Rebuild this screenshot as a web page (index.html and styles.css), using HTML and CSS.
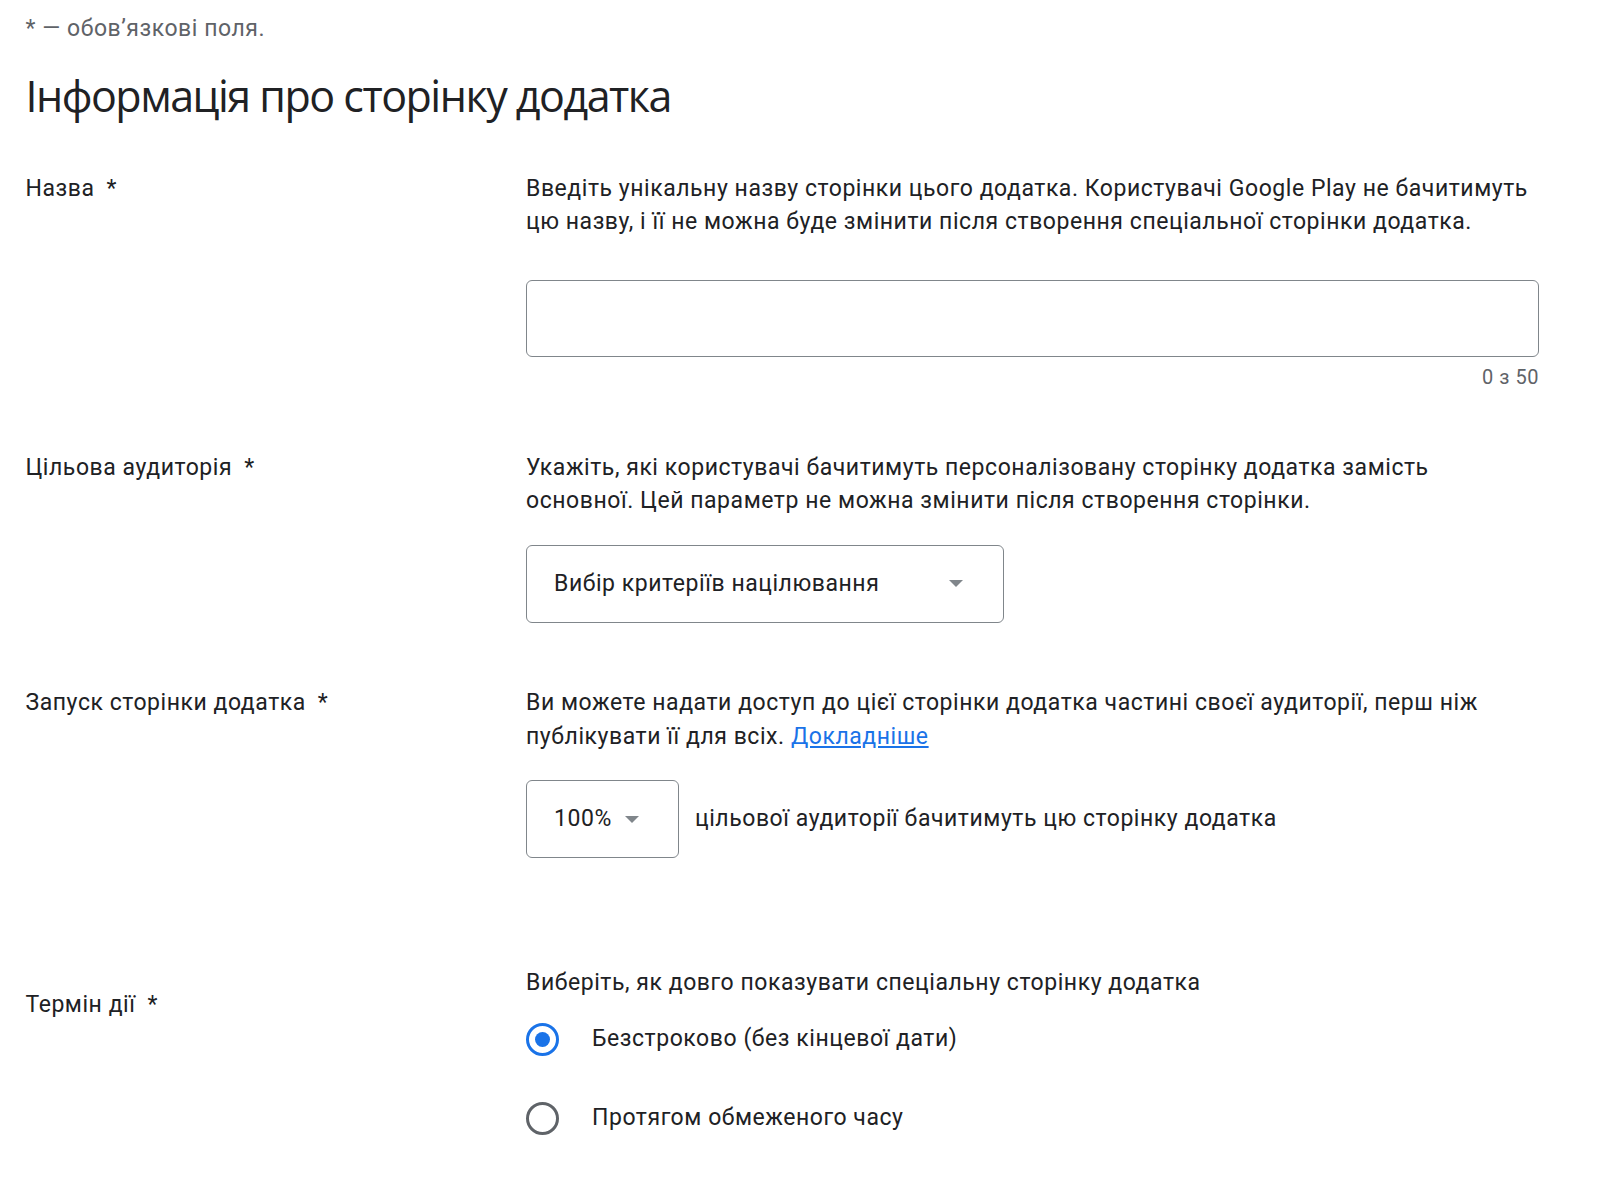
FILE: index.html
```html
<!DOCTYPE html>
<html lang="uk">
<head>
<meta charset="utf-8">
<title>Інформація про сторінку додатка</title>
<link rel="stylesheet" href="styles.css">
</head>
<body>
<main class="page">
  <p class="note">* — обов’язкові поля.</p>
  <h1 class="title">Інформація про сторінку додатка</h1>

  <section class="row row-name">
    <div class="label">Назва<span class="req">*</span></div>
    <div class="field">
      <p class="desc">Введіть унікальну назву сторінки цього додатка. Користувачі Google Play не бачитимуть цю назву, і її не можна буде змінити після створення спеціальної сторінки додатка.</p>
      <div class="input"></div>
      <div class="counter">0 з 50</div>
    </div>
  </section>

  <section class="row row-audience">
    <div class="label">Цільова аудиторія<span class="req">*</span></div>
    <div class="field">
      <p class="desc">Укажіть, які користувачі бачитимуть персоналізовану сторінку додатка замість основної. Цей параметр не можна змінити після створення сторінки.</p>
      <div class="select select-wide">
        <span>Вибір критеріїв націлювання</span>
        <svg class="arrow" width="14" height="7" viewBox="0 0 14 7"><path d="M0 0 L14 0 L7 7 Z"/></svg>
      </div>
    </div>
  </section>

  <section class="row row-launch">
    <div class="label">Запуск сторінки додатка<span class="req">*</span></div>
    <div class="field">
      <p class="desc">Ви можете надати доступ до цієї сторінки додатка частині своєї аудиторії, перш ніж публікувати її для всіх. <a class="link" href="#">Докладніше</a></p>
      <div class="launch-line">
        <div class="select select-small">
          <span>100%</span>
          <svg class="arrow" width="14" height="7" viewBox="0 0 14 7"><path d="M0 0 L14 0 L7 7 Z"/></svg>
        </div>
        <span class="launch-text">цільової аудиторії бачитимуть цю сторінку додатка</span>
      </div>
    </div>
  </section>

  <section class="row row-term">
    <div class="label label-term">Термін дії<span class="req">*</span></div>
    <div class="field">
      <p class="desc">Виберіть, як довго показувати спеціальну сторінку додатка</p>
      <div class="radio-row">
        <span class="radio radio-on"></span>
        <span>Безстроково (без кінцевої дати)</span>
      </div>
      <div class="radio-row">
        <span class="radio"></span>
        <span>Протягом обмеженого часу</span>
      </div>
    </div>
  </section>
</main>
</body>
</html>
```

FILE: styles.css
```css
html, body {
  margin: 0;
  padding: 0;
  background: #ffffff;
}

body {
  font-family: Roboto, "Noto Sans", "Liberation Sans", sans-serif;
  font-size: 23px;
  line-height: 33.6px;
  letter-spacing: 0.55px;
  color: #202124;
}

.page {
  padding: 12px 0 0 25.5px;
  width: 1514px;
}

.note {
  margin: 0;
  color: #5f6368;
}

.title {
  margin: 22px 0 0 0;
  font-family: "Open Sans", "Noto Sans", sans-serif;
  font-weight: 500;
  font-size: 43px;
  line-height: 56px;
  letter-spacing: -1.5px;
  color: #202124;
}

.row {
  display: grid;
  grid-template-columns: 500.5px 1013px;
}

.row-name { margin-top: 48px; }
.row-audience { margin-top: 62px; }
.row-launch { margin-top: 63px; }
.row-term { margin-top: 108px; }

.label {
  color: #202124;
}

.label-term {
  padding-top: 22px;
}

.req {
  margin-left: 12px;
}

.desc {
  margin: 0;
}

.input {
  margin-top: 41px;
  height: 75px;
  border: 1px solid #80868b;
  border-radius: 6px;
}

.counter {
  margin-top: 8px;
  text-align: right;
  font-size: 20px;
  line-height: 24px;
  color: #5f6368;
}

.select {
  box-sizing: border-box;
  height: 78px;
  border: 1px solid #80868b;
  border-radius: 6px;
  display: flex;
  align-items: center;
  padding: 0 40px 0 27px;
}

.select-wide {
  margin-top: 27px;
  width: 478px;
  justify-content: space-between;
}

.select-small {
  width: 153px;
  gap: 13px;
}

.arrow {
  fill: #80868b;
  flex: none;
}

.launch-line {
  margin-top: 27px;
  display: flex;
  align-items: center;
  gap: 16px;
}

.link {
  color: #1a73e8;
  text-decoration: underline;
}

.radio-row {
  height: 79px;
  display: flex;
  align-items: center;
  gap: 33px;
}

.radio {
  box-sizing: border-box;
  width: 33px;
  height: 33px;
  border: 3px solid #5f6368;
  border-radius: 50%;
  display: flex;
  align-items: center;
  justify-content: center;
  flex: none;
}

.radio-on {
  border-color: #1a73e8;
}

.radio-on::after {
  content: "";
  width: 15px;
  height: 15px;
  border-radius: 50%;
  background: #1a73e8;
}
```
